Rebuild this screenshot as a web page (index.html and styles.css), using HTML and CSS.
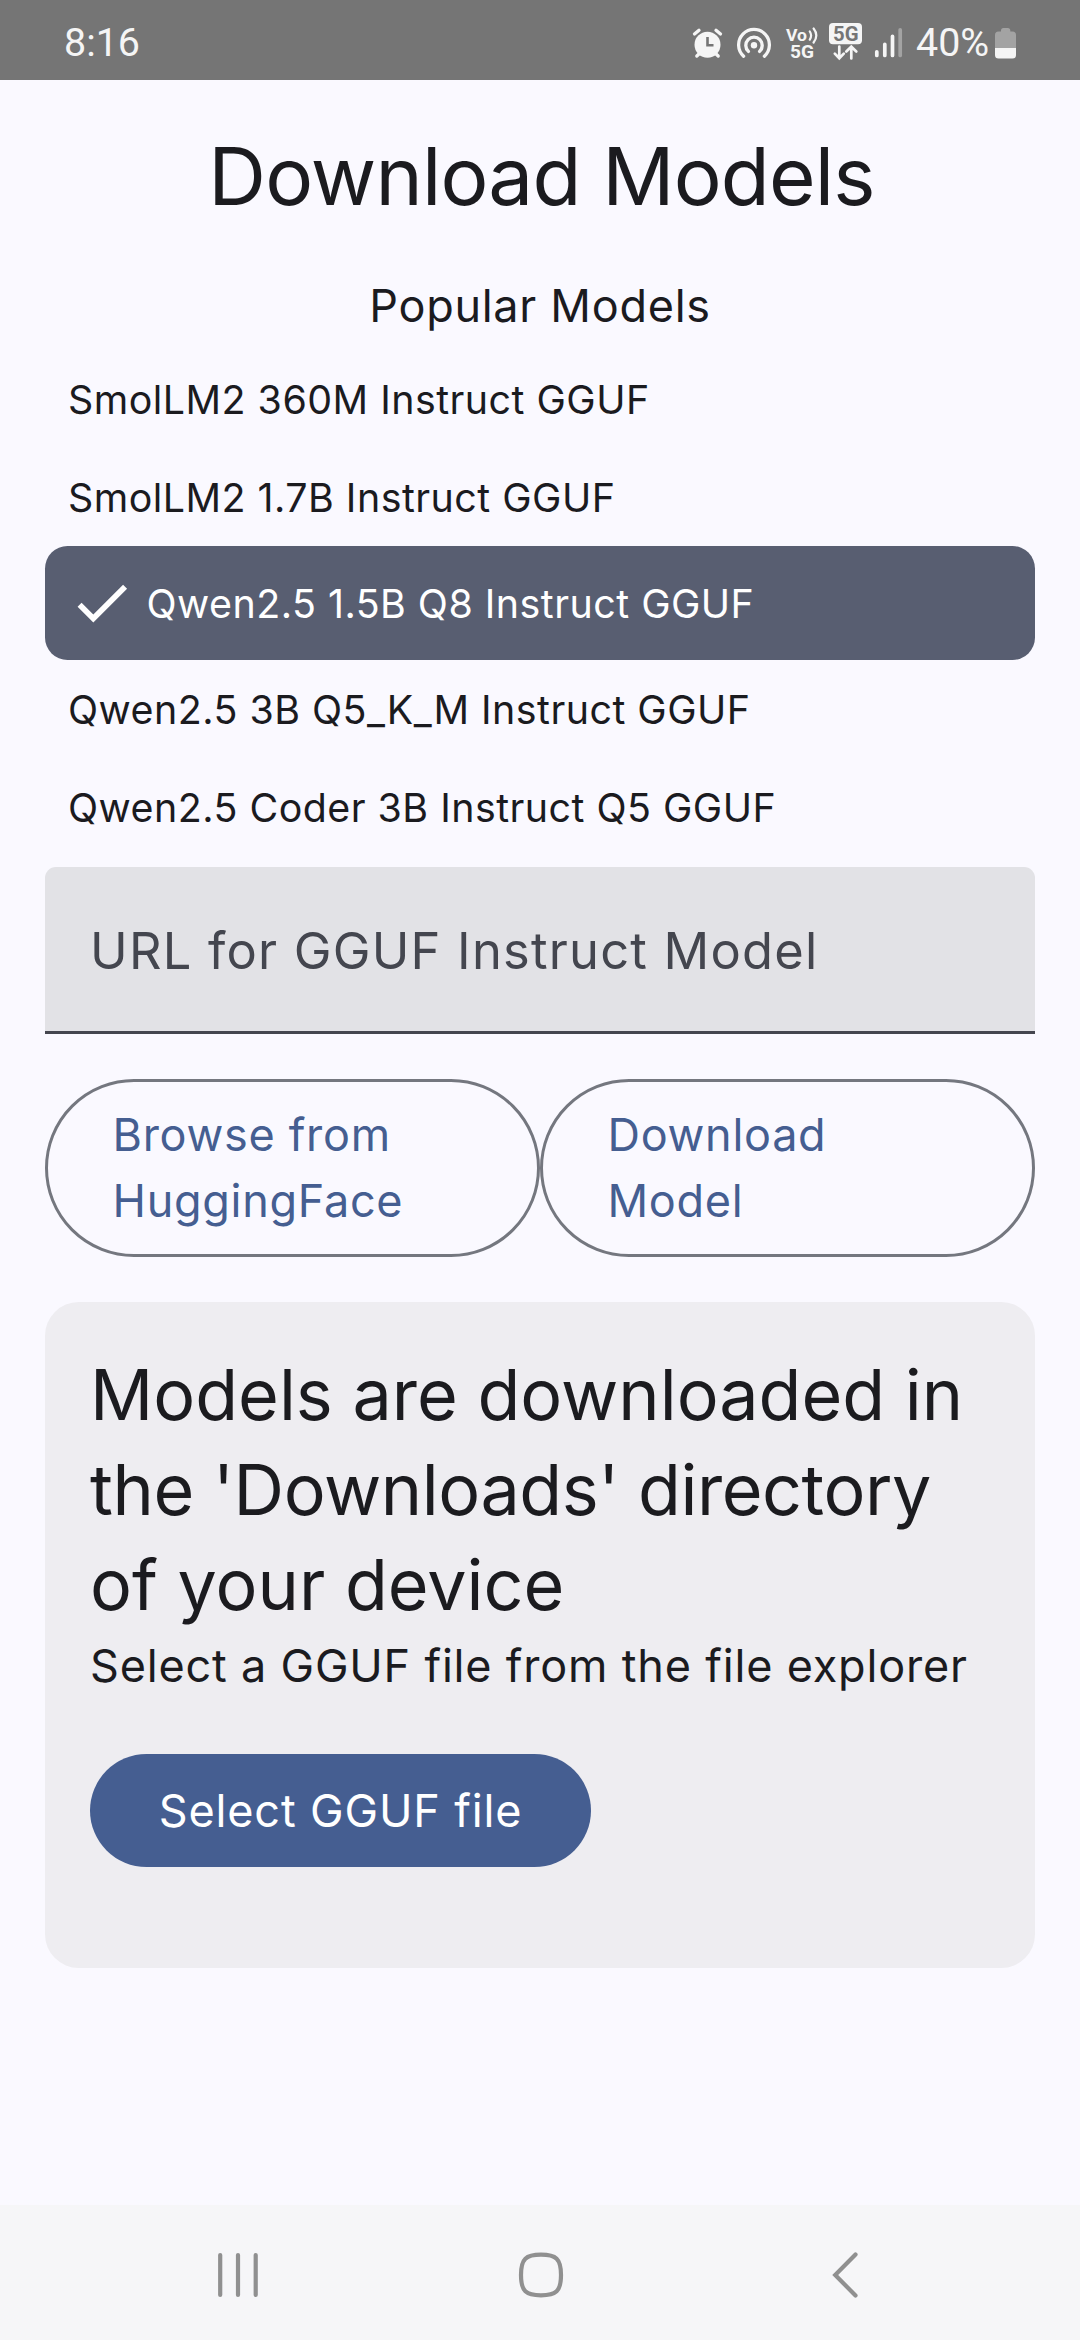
FILE: index.html
```
<!DOCTYPE html>
<html lang="en">
<head>
<meta charset="utf-8">
<title>Download Models</title>
<link rel="stylesheet" href="styles.css">
</head>
<body>
<header class="status">
  <span class="clock">8:16</span>
  <div class="status-icons">
    <svg class="alarm" viewBox="690 24 35 40" width="35" height="40">
      <circle cx="707.5" cy="44.8" r="13" class="fill"/>
      <path d="M694.5 34l4.5-3.8M720.5 34l-4.500-3.800M700 53l-3.200 3M715 53l3.200 3" class="line w3"/>
      <path d="M707.500 37v8.200h6" class="cut"/>
    </svg>
    <svg class="hotspot" viewBox="735 24 38 40" width="38" height="40">
      <circle cx="754" cy="45.3" r="3.2" class="fill"/>
      <path d="M748.400 51.400a8.200 8.200 0 1 1 11.200 0M743.600 56.200a15.400 15.400 0 1 1 20.800 0" class="line w3"/>
    </svg>
    <svg class="vo" viewBox="784 20 36 44" width="36" height="44">
      <text x="786" y="41" class="vo-text" textLength="21" lengthAdjust="spacingAndGlyphs">Vo</text>
      <text x="790" y="58" class="net-text" textLength="24" lengthAdjust="spacingAndGlyphs">5G</text>
      <path d="M809.800 31.500q2.600 4 0 8.200M813.600 28.500q5.400 6.800 0 14" class="line thin"/>
    </svg>
    <svg class="five" viewBox="827 20 37 44" width="37" height="44">
      <rect x="829" y="23" width="33" height="21.3" rx="4" class="fill"/>
      <text x="833" y="41" class="box-text" textLength="25.5" lengthAdjust="spacingAndGlyphs">5G</text>
      <path d="M839.300 46.500v11.600M834.800 53.600l4.500 4.600 4.500-4.600M851.300 58.500V47M846.300 51.500l5-4.800 5 4.800" class="line arrow"/>
    </svg>
    <svg class="signal" viewBox="873 24 30 40" width="30" height="40">
      <path d="M876.800 51.800v3.600M884.800 44.300v11.100M892.500 36.300v19.100" class="line bar"/>
      <path d="M900.200 29.800v25.600" class="line bar dim"/>
    </svg>
    <span class="percent">40%</span>
    <svg class="battery" viewBox="993 24 26 40" width="26" height="40">
      <path d="M995 48V35q0-3.500 3.500-3.500h2.500v-1q0-2.500 2.500-2.500h4.300q2.500 0 2.500 2.500v1h2.200q3.500 0 3.500 3.500v13z" class="dim-fill"/>
      <path d="M995 48h21v7q0 3.500-3.500 3.500h-14q-3.500 0-3.500-3.500z" class="fill"/>
    </svg>
  </div>
</header>

<main class="screen">
  <h1 class="title">Download Models</h1>
  <h2 class="subtitle">Popular Models</h2>
  <ul class="models">
    <li class="model">SmolLM2 360M Instruct GGUF</li>
    <li class="model">SmolLM2 1.7B Instruct GGUF</li>
    <li class="model selected">
      <svg class="check" viewBox="0 0 24 24"><path d="M9 16.170L4.830 12l-1.420 1.410L9 19 21 7l-1.410-1.410z"/></svg>
      Qwen2.5 1.5B Q8 Instruct GGUF
    </li>
    <li class="model">Qwen2.5 3B Q5_K_M Instruct GGUF</li>
    <li class="model">Qwen2.5 Coder 3B Instruct Q5 GGUF</li>
  </ul>
  <div class="field">URL for GGUF Instruct Model</div>
  <div class="actions">
    <button class="outlined">Browse from<br>HuggingFace</button>
    <button class="outlined">Download<br>Model</button>
  </div>
  <section class="card">
    <p class="card-title">Models are downloaded in <span class="tight">the 'Downloads' directory</span> of your device</p>
    <p class="card-text">Select a GGUF file from the file explorer</p>
    <button class="filled">Select GGUF file</button>
  </section>
</main>

<nav class="navbar">
  <svg class="nav-icon" viewBox="0 0 60 60"><path d="M10.200 10v40M28 10v40M45.700 10v40"/></svg>
  <svg class="nav-icon" viewBox="0 0 60 60"><path d="M30 9.700c-15 0-20 4-20 20.300s5 20.300 20 20.300 20-4 20-20.300-5-20.300-20-20.300z"/></svg>
  <svg class="nav-icon" viewBox="0 0 60 60"><path d="M43.500 9.500L23.200 30l20.300 20.500"/></svg>
</nav>
</body>
</html>
```

FILE: styles.css
```
* {
  box-sizing: border-box;
  margin: 0;
  padding: 0;
}

body {
  display: flex;
  flex-direction: column;
  width: 1080px;
  height: 2340px;
  background: #faf9ff;
  color: #1b1b1f;
  font-family: Inter, sans-serif;
  font-weight: 400;
}

/* Status bar */
.status {
  display: flex;
  justify-content: space-between;
  align-items: center;
  height: 80px;
  padding: 0 61px 0 64px;
  background: #757575;
  color: #f5f5f5;
  font: 400 39.4px/80px Roboto, sans-serif;
}

.clock,
.percent {
  padding-top: 5px;
}

.status-icons {
  display: flex;
  align-items: center;
  height: 80px;
}

.status-icons svg {
  flex: none;
  margin-top: 8px;
}

.status-icons .vo,
.status-icons .five {
  margin-top: 4px;
}

.hotspot { margin-left: 10px; }
.vo { margin-left: 11px; }
.five { margin-left: 7px; }
.signal { margin-left: 9px; }

.percent {
  width: 77px;
  margin-left: 13px;
}

.fill { fill: #f5f5f5; }
.dim-fill { fill: #a3a3a3; }

.line {
  fill: none;
  stroke: #f5f5f5;
  stroke-linecap: round;
}

.w3 { stroke-width: 3.3px; }
.thin { stroke-width: 2.2px; }
.arrow { stroke-width: 2.7px; }
.bar { stroke-width: 3.7px; }
.dim { stroke: #a3a3a3; }

.cut {
  fill: none;
  stroke: #757575;
  stroke-width: 2.6px;
}

.vo-text,
.net-text,
.box-text {
  fill: #f5f5f5;
  font: 700 17px Roboto, sans-serif;
}

.net-text { font-size: 18px; }

.box-text {
  fill: #757575;
  font-size: 20px;
}

/* Content */
.screen {
  flex: 1;
  display: flex;
  flex-direction: column;
  padding: 48px 45px 0;
}

.title {
  padding-left: 3px;
  font-size: 80px;
  font-weight: 400;
  line-height: 96px;
  letter-spacing: -0.84px;
  text-align: center;
}

.subtitle {
  margin-top: 38px;
  font-size: 45px;
  font-weight: 400;
  line-height: 88px;
  letter-spacing: 0.71px;
  text-align: center;
}

.models {
  list-style: none;
}

.model {
  display: flex;
  align-items: center;
  height: 98px;
  padding: 0 23px;
  font-size: 39.375px;
  letter-spacing: 0.48px;
}

.selected {
  gap: 11px;
  height: 114px;
  border-radius: 22.5px;
  background: #585e71;
  color: #fff;
}

.check {
  width: 67.5px;
  height: 67.5px;
  fill: #fff;
}

.field {
  height: 167px;
  margin-top: 11px;
  padding: 3px 45px 0;
  border-bottom: 3px solid #44464f;
  border-radius: 11px 11px 0 0;
  background: #e2e2e6;
  color: #44464f;
  font-size: 50.625px;
  line-height: 161px;
  letter-spacing: 1.22px;
}

.actions {
  display: grid;
  grid-template-columns: 1fr 1fr;
  margin-top: 45px;
}

.outlined {
  height: 178px;
  padding: 0 64.5px;
  border: 3px solid #74777f;
  border-radius: 89px;
  background: none;
  color: #455e91;
  font: 400 45px/66px Inter, sans-serif;
  letter-spacing: 0.71px;
  text-align: left;
}

.card {
  height: 666px;
  margin-top: 45px;
  padding: 45px;
  border-radius: 33.75px;
  background: #eeedf1;
}

.card-title {
  font-size: 70px;
  line-height: 95px;
}

.tight {
  letter-spacing: -0.44px;
}

.card-text {
  font-size: 45px;
  line-height: 67px;
  letter-spacing: 0.81px;
  white-space: nowrap;
}

.filled {
  width: 501px;
  height: 113px;
  margin-top: 55px;
  border: 0;
  border-radius: 56.5px;
  background: #455e91;
  color: #fff;
  font: 400 45px/113px Inter, sans-serif;
  letter-spacing: 0.86px;
}

/* Navigation bar */
.navbar {
  display: flex;
  justify-content: space-between;
  align-items: center;
  height: 135px;
  padding: 5px 208px 0 210px;
  background: #f6f6f8;
}

.nav-icon {
  width: 60px;
  height: 60px;
  fill: none;
  stroke: #909090;
  stroke-width: 4.2px;
  stroke-linecap: round;
}
```
